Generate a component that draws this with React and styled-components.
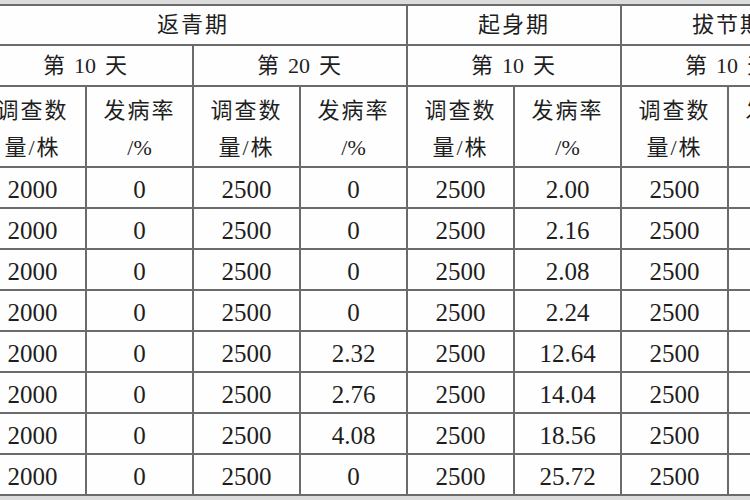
import styled, { createGlobalStyle } from "styled-components";

const GlobalStyle = createGlobalStyle`
  html, body {
    margin: 0;
    padding: 0;
    background: #dcdcdc;
  }
`;

const rows = [
  ["2000", "0", "2500", "0", "2500", "2.00", "2500", "0"],
  ["2000", "0", "2500", "0", "2500", "2.16", "2500", "0"],
  ["2000", "0", "2500", "0", "2500", "2.08", "2500", "0"],
  ["2000", "0", "2500", "0", "2500", "2.24", "2500", "0"],
  ["2000", "0", "2500", "2.32", "2500", "12.64", "2500", "0"],
  ["2000", "0", "2500", "2.76", "2500", "14.04", "2500", "0"],
  ["2000", "0", "2500", "4.08", "2500", "18.56", "2500", "0"],
  ["2000", "0", "2500", "0", "2500", "25.72", "2500", "0"],
];

const stages = [
  { name: "返青期", span: 4 },
  { name: "起身期", span: 2 },
  { name: "拔节期", span: 2 },
];

const days = [10, 20, 10, 10];

const App = () => {
  return (
    <Page>
      <GlobalStyle />
      <Table>
        <colgroup>
          {Array.from({ length: 8 }).map((_, i) => (
            <col key={i} style={{ width: 107 }} />
          ))}
        </colgroup>
        <thead>
          <Row height={40}>
            {stages.map(({ name, span }, i) => (
              <HeadCell key={i} colSpan={span}>
                <Han>{name}</Han>
              </HeadCell>
            ))}
          </Row>
          <Row height={41}>
            {days.map((day, i) => (
              <HeadCell key={i} colSpan={2}>
                <Han>第</Han>
                <DayNumber>{day}</DayNumber>
                <Han>天</Han>
              </HeadCell>
            ))}
          </Row>
          <Row height={80}>
            {Array.from({ length: 4 }).map((_, i) => [
              <HeadCell key={`n${i}`} twoLine>
                <Han>调查数</Han>
                <br />
                <Han>量/株</Han>
              </HeadCell>,
              <HeadCell key={`r${i}`} twoLine>
                <Han>发病率</Han>
                <br />
                /%
              </HeadCell>,
            ])}
          </Row>
        </thead>
        <tbody>
          {rows.map((row, i) => (
            <Row key={i} height={41}>
              {row.map((value, j) => (
                <DataCell key={j}>{value}</DataCell>
              ))}
            </Row>
          ))}
        </tbody>
      </Table>
    </Page>
  );
};

const Page = styled.div`
  width: 750px;
  height: 500px;
  overflow: hidden;
  padding-top: 4px;
  box-sizing: border-box;
  background: #dcdcdc;
`;

const Table = styled.table`
  margin-left: -22px;
  width: 856px;
  table-layout: fixed;
  border-collapse: collapse;
  background: #fefefe;
  color: #1e1e1e;
  font-family: "Liberation Serif", "Noto Sans CJK SC", serif;
`;

const Row = styled.tr`
  height: ${({ height }) => height}px;
`;

const HeadCell = styled.th`
  border: 2px solid #6b6b6b;
  padding: ${({ twoLine }) => (twoLine ? "5px 0 0" : "0")};
  height: ${({ twoLine }) => (twoLine ? "73px" : "auto")};
  box-sizing: border-box;
  font-weight: 400;
  font-size: 22px;
  line-height: ${({ twoLine }) => (twoLine ? "37px" : "1")};
  text-align: center;
  vertical-align: middle;
  white-space: nowrap;
  overflow: hidden;
`;

const Han = styled.span`
  letter-spacing: 2px;
`;

const DayNumber = styled.span`
  margin: 0 9px 0 7px;
`;

const DataCell = styled.td`
  border: 2px solid #6b6b6b;
  padding: 4px 0 0;
  font-size: 25px;
  line-height: 1;
  text-align: center;
  vertical-align: middle;
  white-space: nowrap;
  overflow: hidden;
`;

export default App;
